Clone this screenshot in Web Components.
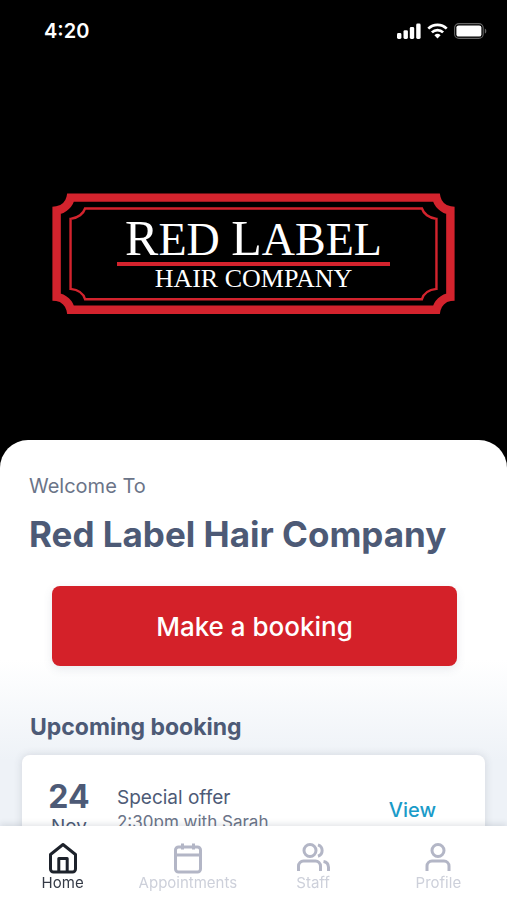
<!DOCTYPE html>
<html lang="en">
<head>
<meta charset="utf-8">
<meta name="viewport" content="width=device-width, initial-scale=1">
<title>Red Label Hair Company</title>
<style>
  body {
    margin: 0;
    background: #000;
    font-family: Inter, "Open Sans", sans-serif;
    color: #4d5a76;
  }
</style>
</head>
<body>
<salon-screen>
  <status-bar slot="hero" time="4:20"></status-bar>
  <brand-logo slot="hero" name="Red Label" tagline="HAIR COMPANY"></brand-logo>

  <welcome-header greeting="Welcome To">Red Label Hair Company</welcome-header>
  <booking-button>Make a booking</booking-button>
  <upcoming-list heading="Upcoming booking">
    <booking-card day="24" month="Nov" service="Special offer" details="2:30pm with Sarah"></booking-card>
  </upcoming-list>

  <tab-bar slot="tabs">
    <tab-item icon="home" active>Home</tab-item>
    <tab-item icon="calendar">Appointments</tab-item>
    <tab-item icon="staff">Staff</tab-item>
    <tab-item icon="profile">Profile</tab-item>
  </tab-bar>
</salon-screen>

<script>
class SalonScreen extends HTMLElement {
  constructor() {
    super();
    const shadow = this.attachShadow({ mode: 'open' });
    shadow.innerHTML = `
      <style>
        :host {
          display: flex;
          flex-direction: column;
          height: 100vh;
        }
        main {
          flex: 1;
          min-height: 0;
          display: flex;
          flex-direction: column;
          overflow-y: auto;
          scrollbar-width: none;
          background: #000;
        }
        header {
          flex: none;
          padding-bottom: 126px;
        }
        .sheet {
          flex: 1 0 auto;
          padding: 32px 22px 24px;
          border-radius: 28px 28px 0 0;
          background: linear-gradient(#fff 220px, #eef2f7 320px);
        }
      </style>
      <main>
        <header><slot name="hero"></slot></header>
        <div class="sheet"><slot></slot></div>
      </main>
      <slot name="tabs"></slot>
    `;
  }
}

class StatusBar extends HTMLElement {
  constructor() {
    super();
    const shadow = this.attachShadow({ mode: 'open' });
    shadow.innerHTML = `
      <style>
        :host {
          display: flex;
          align-items: center;
          justify-content: space-between;
          height: 62px;
          padding: 0 20px 0 44px;
          color: #fff;
          font-size: 20px;
          font-weight: 600;
        }
        .icons {
          display: flex;
          align-items: center;
          gap: 6px;
        }
        svg { display: block; }
      </style>
      <span>${this.getAttribute('time')}</span>
      <div class="icons">
        <svg width="24" height="16" viewBox="0 0 24 16" fill="#fff" aria-hidden="true">
          <rect x="0" y="10" width="4.4" height="6" rx="1.4"/>
          <rect x="6.5" y="7.2" width="4.4" height="8.8" rx="1.4"/>
          <rect x="12.8" y="4" width="4.4" height="12" rx="1.4"/>
          <rect x="19.2" y="0.6" width="4.4" height="15.4" rx="1.4"/>
        </svg>
        <svg width="21" height="16" viewBox="0 0 21 16" fill="none" stroke="#fff" stroke-width="2.7" aria-hidden="true">
          <path d="M1.3 5.6A13.2 13.2 0 0 1 19.7 5.6"/>
          <path d="M4.9 9.4A8 8 0 0 1 16.1 9.4"/>
          <path d="M7.4 12.2a4.6 4.6 0 0 1 6.2 0l-3.1 3.3z" fill="#fff" stroke="none"/>
        </svg>
        <svg width="33" height="16" viewBox="0 0 33 16" aria-hidden="true">
          <rect x="0.6" y="0.6" width="28.6" height="14.8" rx="4.4" fill="none" stroke="#666" stroke-width="1.1"/>
          <rect x="2.4" y="2.4" width="25" height="11.2" rx="2.2" fill="#fff"/>
          <path d="M30.8 5.4c2 .8 2 4.4 0 5.2z" fill="#666"/>
        </svg>
      </div>
    `;
  }
}

class BrandLogo extends HTMLElement {
  constructor() {
    super();
    const shadow = this.attachShadow({ mode: 'open' });
    // capitals of the name are set larger, the rest as small capitals
    const name = this.getAttribute('name').split(' ')
      .map(word => `<b>${word[0]}</b>${word.slice(1).toUpperCase()}`)
      .join(' ');
    shadow.innerHTML = `
      <style>
        :host {
          display: grid;
          padding: 131px 52px 0;
          justify-items: center;
          align-items: center;
          color: #fff;
          font-family: "Liberation Serif", serif;
        }
        svg, .text { grid-area: 1 / 1; }
        svg {
          display: block;
          width: 100%;
        }
        .text {
          display: flex;
          flex-direction: column;
          align-items: center;
        }
        .name {
          padding: 0 8px;
          border-bottom: 4px solid #d3232d;
          font-size: 46px;
          line-height: 44px;
          white-space: nowrap;
        }
        b {
          font-size: 50px;
          font-weight: normal;
        }
        .tagline {
          font-size: 26px;
          line-height: 26px;
        }
      </style>
      <svg viewBox="0 0 402 121" fill="none" stroke="#d3232d" aria-hidden="true">
        <path stroke-width="8.4" d="M18.6 4.6H383.4C384.5 10.5 390 16.6 397.4 17.4V103.6C390 104.4 384.5 110.5 383.4 116.4H18.6C17.5 110.5 12 104.4 4.6 103.6V17.4C12 16.6 17.5 10.5 18.6 4.6Z"/>
        <path stroke-width="2.4" d="M33 15.4H369C370.5 20.5 376 25 383.5 25.8V95.6C376 96.5 370.5 100.5 369 106H33C31.5 100.5 26 96.5 18.5 95.6V25.8C26 25 31.5 20.5 33 15.4Z"/>
      </svg>
      <div class="text">
        <div class="name">${name}</div>
        <div class="tagline">${this.getAttribute('tagline')}</div>
      </div>
    `;
  }
}

class WelcomeHeader extends HTMLElement {
  constructor() {
    super();
    const shadow = this.attachShadow({ mode: 'open' });
    shadow.innerHTML = `
      <style>
        :host {
          display: block;
          padding: 0 7px;
        }
        p {
          margin: 0 0 14px;
          color: #6b7488;
          font-size: 20px;
          line-height: 28px;
        }
        h1 {
          margin: 0;
          font-size: 35px;
          font-weight: 700;
          line-height: 40px;
        }
      </style>
      <p>${this.getAttribute('greeting')}</p>
      <h1><slot></slot></h1>
    `;
  }
}

class BookingButton extends HTMLElement {
  constructor() {
    super();
    const shadow = this.attachShadow({ mode: 'open' });
    shadow.innerHTML = `
      <style>
        :host {
          display: block;
          padding: 32px 28px 0 30px;
        }
        button {
          width: 100%;
          height: 80px;
          border: 0;
          border-radius: 8px;
          background: #d42129;
          box-shadow: 0 3px 10px rgba(77, 90, 118, .12);
          color: #fff;
          font: 500 26px Inter, "Open Sans", sans-serif;
          cursor: pointer;
        }
      </style>
      <button type="button"><slot></slot></button>
    `;
  }
}

class UpcomingList extends HTMLElement {
  constructor() {
    super();
    const shadow = this.attachShadow({ mode: 'open' });
    shadow.innerHTML = `
      <style>
        :host {
          display: block;
          padding-top: 47px;
        }
        h2 {
          margin: 0 0 14px;
          padding: 0 8px;
          font-size: 23px;
          font-weight: 700;
          line-height: 28px;
        }
      </style>
      <h2>${this.getAttribute('heading')}</h2>
      <slot></slot>
    `;
  }
}

class BookingCard extends HTMLElement {
  constructor() {
    super();
    const shadow = this.attachShadow({ mode: 'open' });
    shadow.innerHTML = `
      <style>
        :host {
          display: flex;
          align-items: center;
          padding: 25px 49px 25px 26px;
          border-radius: 8px;
          background: #fff;
          box-shadow: 0 0 8px rgba(60, 70, 90, .16);
        }
        time {
          width: 42px;
          margin-right: 27px;
          text-align: center;
          font-size: 19px;
          line-height: 26px;
        }
        strong {
          display: block;
          font-size: 32px;
          line-height: 34px;
        }
        .info {
          flex: 1;
          font-size: 19px;
          line-height: 24px;
        }
        .details {
          color: #6b7488;
          font-size: 17px;
        }
        a {
          color: #1a9bc9;
          font-size: 20px;
          font-weight: 500;
          text-decoration: none;
        }
      </style>
      <time datetime="11-24"><strong>${this.getAttribute('day')}</strong>${this.getAttribute('month')}</time>
      <div class="info">
        <div>${this.getAttribute('service')}</div>
        <div class="details">${this.getAttribute('details')}</div>
      </div>
      <a href="#booking">View</a>
    `;
  }
}

class TabBar extends HTMLElement {
  constructor() {
    super();
    const shadow = this.attachShadow({ mode: 'open' });
    shadow.innerHTML = `
      <style>
        :host {
          display: block;
          position: relative;
          background: #fff;
          box-shadow: 0 -2px 6px rgba(60, 70, 90, .14);
        }
        nav {
          display: grid;
          grid-template-columns: repeat(4, 1fr);
          padding: 16px 6px 8px 0;
        }
      </style>
      <nav aria-label="Main"><slot></slot></nav>
    `;
  }
}

const icons = {
  home: `
    <path d="M3.5 12.5 16 2.5l12.500 10v14.500a3 3 0 0 1-3 3h-19a3 3 0 0 1-3-3z"/>
    <path d="M11.800 30V16.500h8.400V30"/>`,
  calendar: `
    <rect x="3.5" y="5" width="25" height="25" rx="3"/>
    <path d="M3.5 13h25M10.5 1.500v6M21.500 1.500v6"/>`,
  staff: `
    <circle cx="13" cy="8.5" r="6"/>
    <path d="M1.500 29v-5a5 5 0 0 1 5-5h12a5 5 0 0 1 5 5v5"/>
    <path d="M21 2.800a6 6 0 0 1 0 11.400M26.500 19.500a6 6 0 0 1 5 5.700V29"/>`,
  profile: `
    <circle cx="16" cy="8.5" r="6"/>
    <path d="M5 29v-5a5 5 0 0 1 5-5h12a5 5 0 0 1 5 5v5"/>`
};

class TabItem extends HTMLElement {
  constructor() {
    super();
    const shadow = this.attachShadow({ mode: 'open' });
    shadow.innerHTML = `
      <style>
        :host {
          display: block;
          --icon: #b3b6c6;
          --label: #cdd0da;
        }
        :host([active]) {
          --icon: #1d222b;
          --label: #343a46;
        }
        a {
          display: flex;
          flex-direction: column;
          align-items: center;
          color: var(--label);
          font-size: 15px;
          line-height: 18px;
          text-decoration: none;
        }
        svg {
          display: block;
          overflow: visible;
          stroke: var(--icon);
        }
      </style>
      <a href="#${this.getAttribute('icon')}">
        <svg width="32" height="32" viewBox="0 0 32 32" fill="none" stroke-width="3" stroke-linejoin="round" aria-hidden="true">${icons[this.getAttribute('icon')]}</svg>
        <span><slot></slot></span>
      </a>
    `;
  }
}

customElements.define('salon-screen', SalonScreen);
customElements.define('status-bar', StatusBar);
customElements.define('brand-logo', BrandLogo);
customElements.define('welcome-header', WelcomeHeader);
customElements.define('booking-button', BookingButton);
customElements.define('upcoming-list', UpcomingList);
customElements.define('booking-card', BookingCard);
customElements.define('tab-bar', TabBar);
customElements.define('tab-item', TabItem);
</script>
</body>
</html>
